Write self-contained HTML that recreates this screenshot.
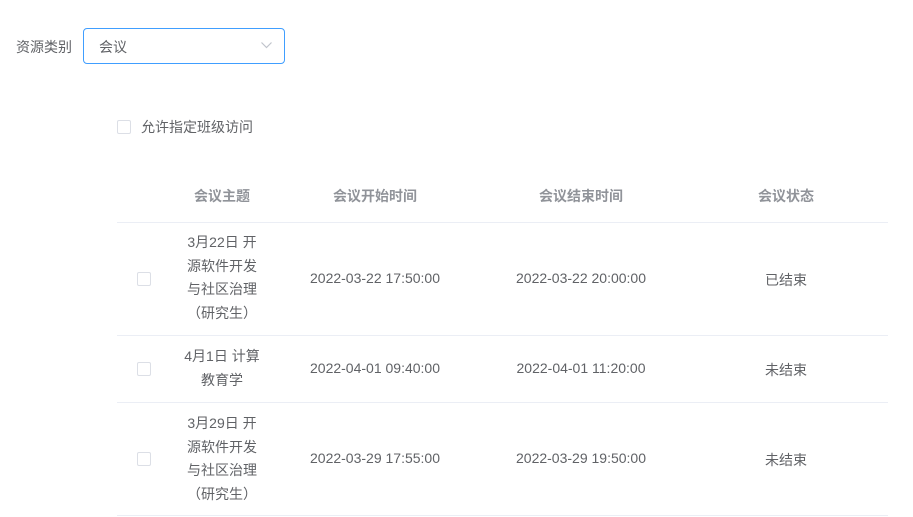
<!DOCTYPE html>
<html><head><meta charset="utf-8"><style>
body{margin:0;width:913px;height:517px;background:#fff;font-family:"Liberation Sans","Noto Sans CJK SC",sans-serif;color:#606266;font-size:14px;position:relative;overflow:hidden}
.a{position:absolute}
.cb{position:absolute;width:12px;height:12px;border:1px solid #dcdfe6;border-radius:2px;background:#fff}
.c{position:absolute;text-align:center;transform:translateX(-50%);white-space:nowrap}
.h{font-weight:bold;color:#909399;font-size:14px}
.line{position:absolute;left:117px;width:771px;height:1px;background:#ebeef5}
.t{line-height:23.5px}
</style></head><body>
<div class="a" style="left:16px;top:37px;font-size:14px">资源类别</div>
<div class="a" style="left:83px;top:28px;width:200px;height:34px;border:1px solid #409eff;border-radius:4px"></div>
<div class="a" style="left:99px;top:37px;font-size:14px">会议</div>
<svg class="a" style="left:260px;top:40px" width="13" height="10" viewBox="0 0 13 10"><path d="M1.5 2.5 L6.5 7.5 L11.5 2.5" fill="none" stroke="#c0c4cc" stroke-width="1.2"/></svg>
<div class="cb" style="left:117px;top:120px"></div>
<div class="a" style="left:141px;top:117px;font-size:14px">允许指定班级访问</div>

<div class="c h" style="left:222px;top:186px">会议主题</div>
<div class="c h" style="left:375px;top:186px">会议开始时间</div>
<div class="c h" style="left:581px;top:186px">会议结束时间</div>
<div class="c h" style="left:786px;top:186px">会议状态</div>
<div class="line" style="top:222px"></div>

<div class="cb" style="left:137px;top:272px"></div>
<div class="c t" style="left:222px;top:231px">3月22日 开<br>源软件开发<br>与社区治理<br>（研究生）</div>
<div class="c" style="left:375px;top:270px">2022-03-22 17:50:00</div>
<div class="c" style="left:581px;top:270px">2022-03-22 20:00:00</div>
<div class="c" style="left:786px;top:270px">已结束</div>
<div class="line" style="top:335px"></div>

<div class="cb" style="left:137px;top:362px"></div>
<div class="c t" style="left:222px;top:345px">4月1日 计算<br>教育学</div>
<div class="c" style="left:375px;top:360px">2022-04-01 09:40:00</div>
<div class="c" style="left:581px;top:360px">2022-04-01 11:20:00</div>
<div class="c" style="left:786px;top:360px">未结束</div>
<div class="line" style="top:402px"></div>

<div class="cb" style="left:137px;top:452px"></div>
<div class="c t" style="left:222px;top:412px">3月29日 开<br>源软件开发<br>与社区治理<br>（研究生）</div>
<div class="c" style="left:375px;top:450px">2022-03-29 17:55:00</div>
<div class="c" style="left:581px;top:450px">2022-03-29 19:50:00</div>
<div class="c" style="left:786px;top:450px">未结束</div>
<div class="line" style="top:515px"></div>
</body></html>
